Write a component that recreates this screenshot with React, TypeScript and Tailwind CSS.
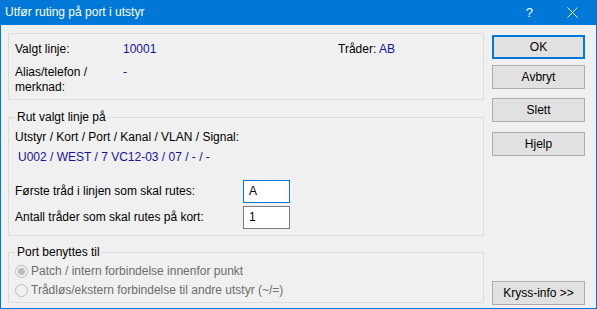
import React from "react";

const FONT = { fontFamily: '"Segoe UI", "Liberation Sans", Arial, sans-serif' };

function Btn({ children, def, className = "" }: { children: React.ReactNode; def?: boolean; className?: string }) {
  return (
    <div
      className={
        "h-[24px] w-[93px] flex items-center justify-center bg-[#e1e1e1] text-[12px] text-black leading-[15px] " +
        (def ? "border-2 border-[#0078d7] " : "border border-[#adadad] ") +
        className
      }
    >
      {children}
    </div>
  );
}

function Radio({ checked, label }: { checked?: boolean; label: string }) {
  return (
    <div className="h-[19px] flex items-center">
      <div className="w-[13px] h-[13px] rounded-full border border-[#bcbcbc] bg-[#f0f0f0] flex items-center justify-center">
        {checked && <div className="w-[7px] h-[7px] rounded-full bg-[#bcbcbc]" />}
      </div>
      <span className="ml-[3px] text-[#6d6d6d]">{label}</span>
    </div>
  );
}

export default function App() {
  return (
    <div className="w-[597px] h-[309px] flex flex-col bg-[#0078d7] text-[12px] leading-[15px] text-black" style={FONT}>
      <div className="h-[25px] flex items-center text-white">
        <span className="ml-[5px] text-[12px]">Utfør ruting på port i utstyr</span>
        <span className="ml-auto mr-[34px] text-[13px]">?</span>
        <svg width="11" height="11" viewBox="0 0 11 11" className="mr-[19px]">
          <path d="M0.5 0.5 L10.5 10.5 M10.5 0.5 L0.5 10.5" stroke="white" strokeWidth="1" />
        </svg>
      </div>
      <div className="mx-[1px] mb-[1px] flex-1 bg-[#f0f0f0] flex">
        {/* left column */}
        <div className="ml-[7px] w-[476px] pt-[8px] flex flex-col">
          {/* group 1 */}
          <div className="h-[67px] border border-[#dcdcdc] pl-[6px] pt-[8px]">
            <div className="flex">
              <span className="w-[108px]">Valgt linje:</span>
              <span className="w-[215px] text-[#151593]">10001</span>
              <span>
                Tråder: <span className="text-[#151593]">AB</span>
              </span>
            </div>
            <div className="flex mt-[8px]">
              <span className="w-[108px]">
                Alias/telefon /
                <br />
                merknad:
              </span>
              <span className="text-[#151593]">-</span>
            </div>
          </div>

          {/* group 2 */}
          <div className="relative mt-[17px] h-[119px] border border-[#dcdcdc] pl-[6px] pt-[12px]">
            <span className="absolute left-[6px] top-[-8px] px-[2px] bg-[#f0f0f0]">Rut valgt linje på</span>
            <div>Utstyr / Kort / Port / Kanal / VLAN / Signal:</div>
            <div className="mt-[5px] pl-[3px] text-[#151593]">U002 / WEST / 7 VC12-03 / 07 / - / -</div>
            <div className="mt-[15px] flex items-center">
              <span className="w-[228px]">Første tråd i linjen som skal rutes:</span>
              <div className="w-[47px] h-[23px] border border-[#0078d7] bg-white flex items-center pl-[5px]">A</div>
            </div>
            <div className="mt-[3px] flex items-center">
              <span className="w-[228px]">Antall tråder som skal rutes på kort:</span>
              <div className="w-[47px] h-[23px] border border-[#7a7a7a] bg-white flex items-center pl-[5px]">1</div>
            </div>
          </div>

          {/* group 3 */}
          <div className="relative mt-[16px] h-[51px] border border-[#dcdcdc] pl-[6px] pt-[9px]">
            <span className="absolute left-[6px] top-[-8px] px-[2px] bg-[#f0f0f0]">Port benyttes til</span>
            <Radio checked label="Patch / intern forbindelse innenfor punkt" />
            <Radio label="Trådløs/ekstern forbindelse til andre utstyr (~/=)" />
          </div>
        </div>

        {/* right column */}
        <div className="ml-[8px] pt-[10px] pb-[3px] flex flex-col">
          <Btn def>OK</Btn>
          <Btn className="mt-[6px]">Avbryt</Btn>
          <Btn className="mt-[9px]">Slett</Btn>
          <Btn className="mt-[10px]">Hjelp</Btn>
          <Btn className="mt-auto">Kryss-info &gt;&gt;</Btn>
        </div>
      </div>
    </div>
  );
}
